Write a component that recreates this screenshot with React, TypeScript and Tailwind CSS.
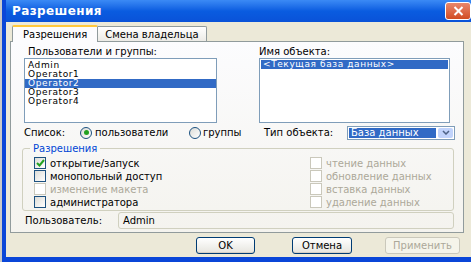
import React from "react";

const font = { fontFamily: '"DejaVu Sans", Verdana, sans-serif' };

function Check({ checked, disabled }: { checked?: boolean; disabled?: boolean }) {
  return (
    <span
      className={`w-[12px] h-[12px] shrink-0 border flex items-center justify-center ${
        disabled ? "border-[#cac8bb] bg-white" : "border-[#1c5180] bg-gradient-to-br from-[#dcdcd7] to-white"
      }`}
    >
      {checked && (
        <svg width="9" height="8" viewBox="0 0 9 8">
          <path d="M1 4 L3.5 6.5 L8 1" stroke="#21a121" strokeWidth="2" fill="none" />
        </svg>
      )}
    </span>
  );
}

function Radio({ on }: { on?: boolean }) {
  return (
    <span className="w-[12px] h-[12px] shrink-0 rounded-full border border-[#1c5180] bg-gradient-to-br from-[#dcdcd7] to-white flex items-center justify-center">
      {on && <span className="w-[5px] h-[5px] rounded-full bg-[#21a121]" />}
    </span>
  );
}

function Btn({ label, disabled }: { label: string; disabled?: boolean }) {
  return (
    <div
      className={`h-[17px] flex items-center justify-center rounded-[3px] border text-[10px] ${
        disabled
          ? "border-[#cac8bb] text-[#aca899] bg-[#f5f4ea]"
          : "border-[#003c74] text-black bg-gradient-to-b from-white to-[#e6e5de] shadow-[inset_0_-1px_0_#d6d0c5]"
      }`}
    >
      {label}
    </div>
  );
}

export default function App() {
  const users = ["Admin", "Operator1", "Operator2", "Operator3", "Operator4"];
  return (
    <div className="w-[471px] h-[262px] overflow-hidden bg-[#9aa3b8] flex" style={font}>
      <div className="w-[2px] bg-[#c9c9c9]" />
      <div className="flex-1 flex flex-col border-l-[4px] border-b-[5px] border-[#0a46d8] bg-[#ece9d8]">
        {/* title bar */}
        <div className="h-[22px] shrink-0 flex items-center justify-between pl-[6px] pr-[0px] bg-gradient-to-b from-[#3b8af5] via-[#0a5ce0] to-[#0a52d8]">
          <span className="text-white font-bold text-[12px] tracking-[0.4px]">Разрешения</span>
          <span className="w-[26px] h-[18px] rounded-[3px] border border-white bg-gradient-to-b from-[#e8876b] to-[#d24b1f] flex items-center justify-center">
            <svg width="11" height="10" viewBox="0 0 11 10">
              <path d="M1.5 1 L9.5 9 M9.5 1 L1.5 9" stroke="white" strokeWidth="2" />
            </svg>
          </span>
        </div>

        {/* tabs */}
        <div className="flex items-end h-[17px] mt-[2px] pl-[6px]">
          <div className="h-[17px] px-[10px] flex items-center text-[10px] bg-[#fcfcfe] border border-b-0 border-[#919b9c] border-t-[2px] border-t-[#ffc83c] rounded-t-[2px] -mb-px relative z-10">
            Разрешения
          </div>
          <div className="h-[15px] px-[7px] flex items-center text-[10px] bg-gradient-to-b from-white to-[#ecebe6] border border-b-0 border-l-0 border-[#919b9c] rounded-tr-[2px]">
            Смена владельца
          </div>
        </div>

        {/* panel */}
        <div className="ml-[4px] w-[454px] h-[192px] shrink-0 border border-[#919b9c] bg-gradient-to-b from-[#fcfcfe] to-[#f4f3ee] pt-[4px] px-[13px] text-[10px] leading-[11px]">
          <div className="flex gap-[42px]">
            <div className="w-[196px]">
              <div className="pl-[4px]">Пользователи и группы:</div>
              <div className="mt-[1px] h-[65px] border border-[#7f9db9] bg-white pt-[2px] text-[9px] tracking-[0.6px]">
                {users.map((u, i) => (
                  <div
                    key={u}
                    className={`h-[9px] leading-[9px] pl-[3px] ${i === 2 ? "bg-[#316ac5] text-white" : ""}`}
                  >
                    {u}
                  </div>
                ))}
              </div>
            </div>
            <div className="w-[194px]">
              <div>Имя объекта:</div>
              <div className="mt-[1px] h-[65px] border border-[#7f9db9] bg-white p-[1px] text-[9px] tracking-[0.6px]">
                <div className="h-[9px] leading-[9px] pl-[2px] bg-[#316ac5] text-white">&lt;Текущая база данных&gt;</div>
              </div>
            </div>
          </div>

          <div className="flex items-center h-[15px] mt-[2px] -mr-[5px]">
            <span className="w-[56px]">Список:</span>
            <Radio on />
            <span className="ml-[3px] w-[94px]">пользователи</span>
            <Radio />
            <span className="ml-[2px] w-[61px]">группы</span>
            <span>Тип объекта:</span>
            <div className="ml-auto w-[108px] h-[14px] border border-[#7f9db9] bg-white flex items-center p-[1px]">
              <span className="flex-1 h-full bg-[#316ac5] text-white leading-[10px] pl-[2px]">База данных</span>
              <span className="w-[15px] h-full ml-[2px] rounded-[2px] bg-[#c1d3fb] flex items-center justify-center">
                <svg width="8" height="5" viewBox="0 0 8 5">
                  <path d="M1 1 L4 4 L7 1" stroke="#4d6185" strokeWidth="1.5" fill="none" />
                </svg>
              </span>
            </div>
          </div>

          {/* group box */}
          <div className="relative mt-[8px] -ml-[2px] -mr-[4px] h-[63px] border border-[#d0d0bf] rounded-[3px] pl-[11px] pr-[11px] pt-[8px]">
            <span className="absolute -top-[6px] left-[7px] px-[3px] bg-[#f8f8f6] text-[#0046d5]">Разрешения</span>
            <div className="flex justify-between">
              <div className="flex flex-col gap-[1px]">
                <div className="flex items-center gap-[4px] h-[12px]"><Check checked />открытие/запуск</div>
                <div className="flex items-center gap-[4px] h-[12px]"><Check />монопольный доступ</div>
                <div className="flex items-center gap-[4px] h-[12px] text-[#aca899]"><Check disabled />изменение макета</div>
                <div className="flex items-center gap-[4px] h-[12px]"><Check />администратора</div>
              </div>
              <div className="flex flex-col gap-[1px] text-[#aca899] w-[132px]">
                <div className="flex items-center gap-[4px] h-[12px]"><Check disabled />чтение данных</div>
                <div className="flex items-center gap-[4px] h-[12px]"><Check disabled />обновление данных</div>
                <div className="flex items-center gap-[4px] h-[12px]"><Check disabled />вставка данных</div>
                <div className="flex items-center gap-[4px] h-[12px]"><Check disabled />удаление данных</div>
              </div>
            </div>
          </div>

          <div className="flex items-center mt-[1px] -ml-[2px] -mr-[4px]">
            <span className="w-[96px] pl-[3px]">Пользователь:</span>
            <div className="flex-1 h-[17px] border border-[#d0d0bf] rounded-[3px] flex items-center pl-[4px]">Admin</div>
          </div>
        </div>

        {/* buttons */}
        <div className="flex justify-end mt-[4px] pr-[11px]">
          <div className="w-[59px]"><Btn label="OK" /></div>
          <div className="w-[60px] ml-[37px]"><Btn label="Отмена" /></div>
          <div className="w-[75px] ml-[33px]"><Btn label="Применить" disabled /></div>
        </div>
      </div>
    </div>
  );
}
